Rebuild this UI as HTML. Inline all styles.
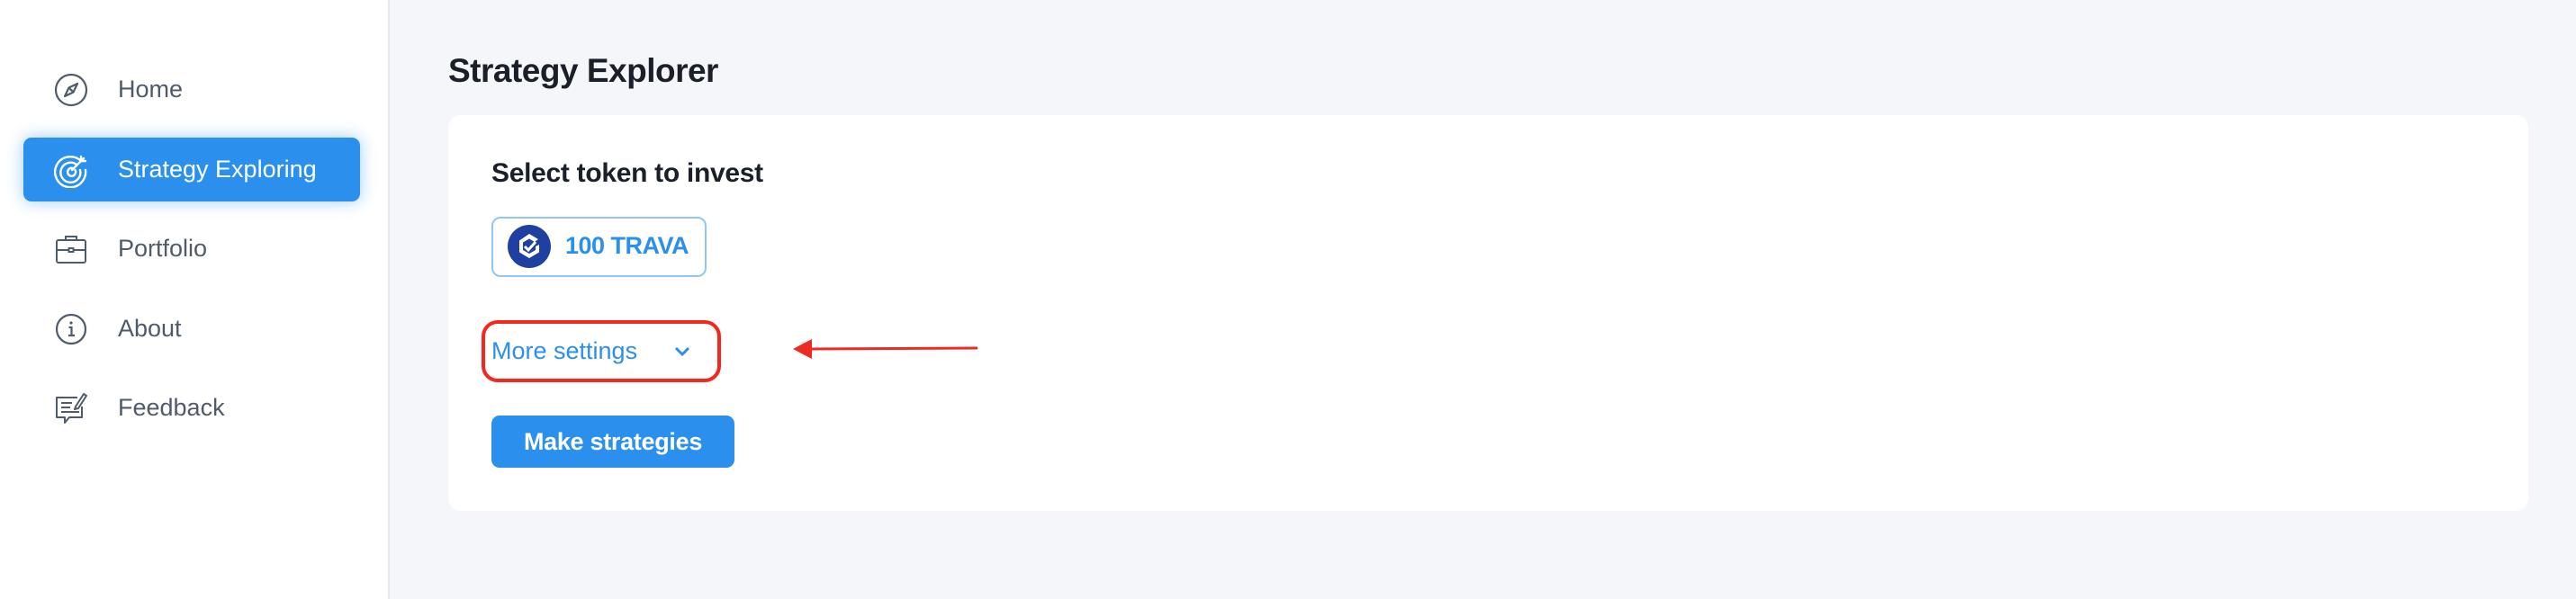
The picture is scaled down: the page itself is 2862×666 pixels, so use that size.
<!DOCTYPE html>
<html><head><meta charset="utf-8"><style>
*{margin:0;padding:0;box-sizing:border-box}
body{width:2862px;height:666px;background:#f5f6fa;font-family:"Liberation Sans",Arial,sans-serif;position:relative;overflow:hidden}
.side{position:absolute;left:0;top:0;width:433px;height:666px;background:#fff;border-right:2px solid #e6e8ee}
.item{position:absolute;left:26px;width:374px;height:71px;display:flex;align-items:center;color:#4f5b6b;font-size:27px}
.item svg{position:absolute;left:34px;top:50%;transform:translateY(-50%)}
.item span{position:absolute;left:105px}
.active{background:#2b8fed;color:#fff;border-radius:9px;box-shadow:0 0 18px rgba(43,143,237,.45)}
.title{position:absolute;left:498px;top:58px;font-size:37px;font-weight:bold;color:#1a1f29;letter-spacing:-.5px}
.card{position:absolute;left:498px;top:128px;width:2311px;height:440px;background:#fff;border-radius:14px}
.abs{position:absolute}
</style></head><body>
<div class="side">
 <div class="item" style="top:64px"><svg width="38" height="38" viewBox="0 0 38 38" fill="none" stroke="#4f5b6b" stroke-width="2.2"><circle cx="19" cy="19" r="17"/><path d="M26 12 L21.5 21.5 L12 26 L16.5 16.5 Z" stroke-linejoin="round"/><path d="M16.5 16.5 L21.5 21.5"/></svg><span>Home</span></div>
 <div class="item active" style="top:153px"><svg width="40" height="40" viewBox="0 0 40 40" fill="none" stroke="#fff" stroke-width="2.4" stroke-linecap="round"><path d="M30 10 A17 17 0 1 0 35 20"/><path d="M25 14 A11 11 0 1 0 29 20"/><path d="M21 18 A4.5 4.5 0 1 0 23.5 20"/><path d="M20 20 L33 7"/><path d="M30 5 L30 10 L35 10"/></svg><span>Strategy Exploring</span></div>
 <div class="item" style="top:241px"><svg width="38" height="38" viewBox="0 0 38 38" fill="none" stroke="#4f5b6b" stroke-width="2"><rect x="3" y="9" width="32" height="25" rx="2"/><path d="M13 9 V5 H25 V9"/><path d="M3 20 H35"/><rect x="16.5" y="18" width="5" height="4" fill="#fff"/></svg><span>Portfolio</span></div>
 <div class="item" style="top:330px"><svg width="38" height="38" viewBox="0 0 38 38" fill="none" stroke="#4f5b6b" stroke-width="2.2"><circle cx="19" cy="19" r="16"/><circle cx="19" cy="12" r="1.6" fill="#4f5b6b" stroke="none"/><path d="M16.5 17 H19.5 V26 M16 26 H23"/></svg><span>About</span></div>
 <div class="item" style="top:418px"><svg width="38" height="40" viewBox="0 0 38 40" fill="none" stroke="#4f5b6b" stroke-width="2" stroke-linejoin="round"><path d="M26 8 H3 V30 H12 V36 L17 30 H31 V18"/><path d="M8 14 H20 M8 19 H18 M8 24 H28"/><path d="M24 18 L33 4 L36 6 L27 20 L23 21 Z"/></svg><span>Feedback</span></div>
</div>
<div class="title">Strategy Explorer</div>
<div class="card"></div>
<div class="abs" style="left:546px;top:176px;font-size:30px;font-weight:bold;color:#1a1f29;letter-spacing:-.3px">Select token to invest</div>
<div class="abs" style="left:546px;top:241px;width:239px;height:67px;border:2px solid #92c6f4;border-radius:10px"></div>
<svg class="abs" style="left:564px;top:250px" width="48" height="48" viewBox="0 0 48 48"><circle cx="24" cy="24" r="24" fill="#1f3fa1"/><path d="M24 10 L34 16 L30 19 L24 15.5 L17 19.5 V28 L24 32 L31 28 V24 L35 22 V30.5 L24 37 L13 30.5 V17.5 Z" fill="#fff"/><path d="M19 24 L23 28 L31 19" stroke="#fff" stroke-width="3" fill="none"/></svg>
<div class="abs" style="left:628px;top:258px;font-size:27px;color:#2b8fed;font-weight:bold;letter-spacing:-.5px">100 TRAVA</div>
<div class="abs" style="left:535px;top:356px;width:266px;height:69px;border:4px solid #f5271d;border-radius:18px"></div>
<div class="abs" style="left:546px;top:375px;font-size:27px;color:#2b8fed">More settings</div>
<svg class="abs" style="left:748px;top:384px" width="20" height="14" viewBox="0 0 20 14"><path d="M3 3 L10 10 L17 3" stroke="#2b8fed" stroke-width="3" fill="none"/></svg>
<svg class="abs" style="left:878px;top:374px" width="212" height="28" viewBox="0 0 212 28"><path d="M3 14 L24 3 L24 25 Z" fill="#ee2a22"/><path d="M20 14 L208 13" stroke="#ee2a22" stroke-width="3"/></svg>
<div class="abs" style="left:546px;top:462px;width:270px;height:58px;background:#2b8fed;border-radius:9px;color:#fff;font-size:27px;font-weight:bold;display:flex;align-items:center;justify-content:center;letter-spacing:-.3px">Make strategies</div>
</body></html>
